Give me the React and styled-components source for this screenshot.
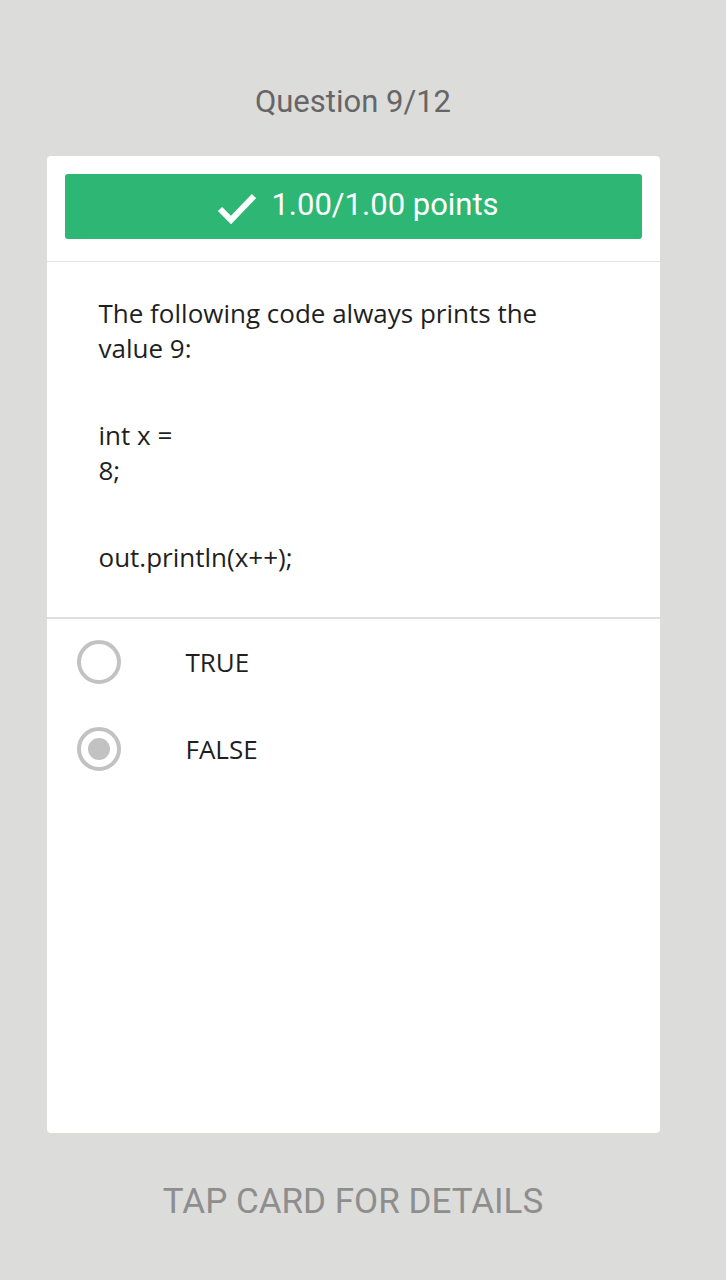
import React from 'react';
import styled, { createGlobalStyle } from 'styled-components';

const GlobalStyle = createGlobalStyle`
  html, body {
    margin: 0;
    padding: 0;
    background: #dcdcdb;
  }
`;

const Page = styled.div`
  width: 706px;
  height: 1280px;
  display: flex;
  flex-direction: column;
  align-items: center;
  background: #dcdcdb;
  font-family: Roboto, 'Liberation Sans', sans-serif;
`;

const Heading = styled.h1`
  margin: 82px 0 0;
  height: 40px;
  line-height: 40px;
  font-size: 31px;
  font-weight: 400;
  color: #666666;
`;

const Card = styled.div`
  margin-top: 34px;
  width: 613px;
  height: 977px;
  background: #ffffff;
  border-radius: 4px;
  display: flex;
  flex-direction: column;
`;

const ScoreWrap = styled.div`
  padding: 18px 18px 22px;
  border-bottom: 1px solid #e3e3e3;
`;

const ScoreBar = styled.div`
  height: 65px;
  box-sizing: border-box;
  padding: 0 0 5px 10px;
  background: #2db674;
  border-radius: 3px;
  display: flex;
  align-items: center;
  justify-content: center;
  gap: 14px;
  color: #ffffff;
  font-size: 31px;
`;

const CheckIcon = styled.svg`
  margin-top: 8px;
  flex-shrink: 0;
`;

const Question = styled.div`
  padding: 34px 52px 42px;
  border-bottom: 2px solid #dedede;
  font-family: 'Open Sans', 'Liberation Sans', sans-serif;
  font-size: 26px;
  line-height: 35px;
  color: #1f1f1f;
`;

const Para = styled.p`
  margin: 0 0 52px;
  width: 480px;

  &:last-child {
    margin-bottom: 0;
  }
`;

const Options = styled.div`
  padding: 21px 0 0 30px;
  display: flex;
  flex-direction: column;
  gap: 43px;
`;

const Option = styled.div`
  display: flex;
  align-items: center;
  height: 44px;
  gap: 65px;
  font-family: 'Open Sans', 'Liberation Sans', sans-serif;
  font-size: 26px;
  color: #1f1f1f;
`;

const Radio = styled.span`
  width: 36px;
  height: 36px;
  border: 4px solid #c2c2c2;
  border-radius: 50%;
  display: flex;
  align-items: center;
  justify-content: center;

  &::after {
    content: '';
    width: 22px;
    height: 22px;
    border-radius: 50%;
    background: ${(p) => (p.checked ? '#c2c2c2' : 'transparent')};
  }
`;

const Footer = styled.div`
  margin-top: 48px;
  font-size: 35px;
  color: #8e8e8e;
`;

const Check = () => (
  <CheckIcon width="40" height="32" viewBox="0 0 40 32">
    <path d="M3 17 L14 28 L37 4" fill="none" stroke="#fff" strokeWidth="6" />
  </CheckIcon>
);

export default function App() {
  return (
    <Page>
      <GlobalStyle />
      <Heading>Question 9/12</Heading>
      <Card>
        <ScoreWrap>
          <ScoreBar>
            <Check />
            <span>1.00/1.00 points</span>
          </ScoreBar>
        </ScoreWrap>
        <Question>
          <Para>The following code always prints the value 9:</Para>
          <Para>
            int x =<br />8;
          </Para>
          <Para>out.println(x++);</Para>
        </Question>
        <Options>
          <Option>
            <Radio />
            TRUE
          </Option>
          <Option>
            <Radio checked />
            FALSE
          </Option>
        </Options>
      </Card>
      <Footer>TAP CARD FOR DETAILS</Footer>
    </Page>
  );
}
